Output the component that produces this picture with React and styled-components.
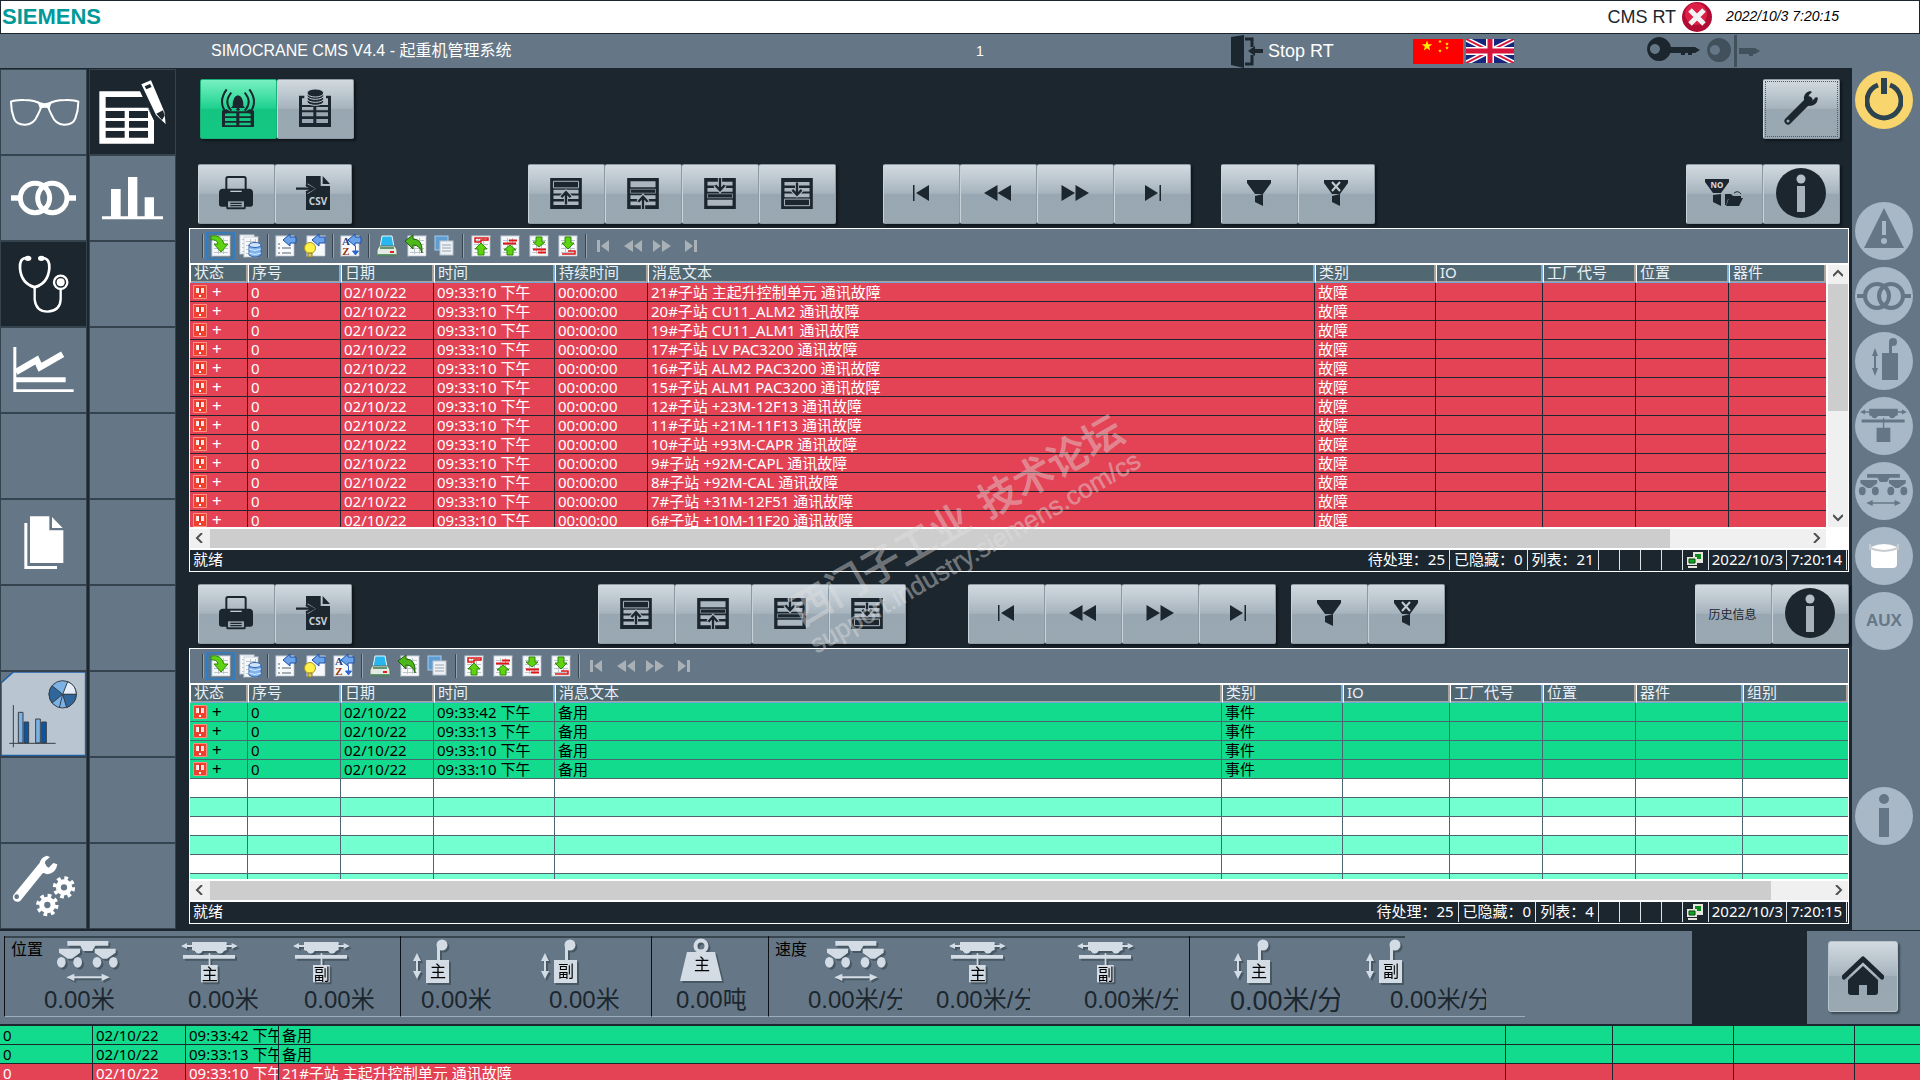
import React from 'react';
import styled, { createGlobalStyle, css } from 'styled-components';

const INK = '#1c262e';
const SLATE = '#657786';
const RED = '#e44356';
const GREEN = '#13db8e';
const MINT = '#73ffcf';
const UI = "'Liberation Sans', Arial, 'Noto Sans CJK SC', sans-serif";
const GRID = "'Noto Sans', Tahoma, 'Noto Sans CJK SC', sans-serif";

const GlobalStyle = createGlobalStyle`
  * { box-sizing: border-box; }
  html, body { margin: 0; padding: 0; background: ${INK}; }
  button { font: inherit; color: inherit; padding: 0; margin: 0; border: 0; background: none; }
  svg { display: block; }
`;

const Page = styled.div`
  display: flex;
  flex-direction: column;
  height: 100vh;
  overflow: hidden;
  background: ${INK};
  font-family: ${UI};
`;

/* ---------- header ---------- */

const BrandBar = styled.header`
  display: flex;
  align-items: center;
  flex: none;
  height: 34px;
  padding: 0 80px 0 1px;
  background: #fff;
  border: 1px solid ${INK};
`;

const Brand = styled.div`
  flex: 1;
  color: #009999;
  font-size: 22px;
  line-height: 32px;
  font-weight: 700;
`;

const Runtime = styled.div`
  display: flex;
  align-items: center;
  gap: 6px;
  color: ${INK};
  font-size: 18px;
`;

const Clock = styled.time`
  margin-left: 14px;
  padding-bottom: 2px;
  color: #000;
  font-size: 14px;
  font-style: italic;
`;

const TitleBar = styled.div`
  display: grid;
  grid-template-columns: 211fr 765fr 255fr 182fr 234fr 273fr;
  align-items: center;
  flex: none;
  height: 34px;
  background: ${SLATE};
  color: #fff;
`;

const Title = styled.h1`
  grid-column: 2;
  margin: 0;
  font-size: 16px;
  line-height: 32px;
  font-weight: 400;
`;

const ScreenNumber = styled.span`
  font-size: 14px;
`;

const StopButton = styled.button`
  display: flex;
  align-items: center;
  gap: 3px;
  font-size: 18px;
`;

const IconRow = styled.div`
  display: flex;
  align-items: center;
  gap: ${(p) => p.$gap}px;
`;

const Flat = styled.button`
  display: flex;
`;

/* ---------- body ---------- */

const Body = styled.div`
  display: grid;
  grid-template-columns: 176px minmax(0, 1fr) 68px;
  flex: none;
`;

const Nav = styled.nav`
  display: grid;
  grid-template-columns: 1fr 1fr;
  grid-auto-rows: 86px;
  column-gap: 2px;
  padding-top: 1px;
`;

const NavButton = styled.button`
  border: 1px solid #35434f;
  background: ${(p) => (p.$active ? INK : SLATE)};
  color: #fff;
  overflow: hidden;
  & > svg { margin: -1px; }
`;

const Main = styled.main`
  position: relative;
  padding: 11px 3px 6px 13px;
`;

const ButtonRow = styled.div`
  display: flex;
  align-items: flex-start;
  padding: 0 ${(p) => p.$end}px 0 ${(p) => p.$start}px;
  margin-bottom: ${(p) => p.$after}px;
`;

const ButtonGroup = styled.div`
  display: flex;
  margin-left: ${(p) => (p.$gap === 'auto' ? 'auto' : `${p.$gap || 0}px`)};
  box-shadow: 2px 2px 2px #10171c;
`;

const gloss = css`
  background: linear-gradient(#d2dae0 0%, #bcc7cf 25%, #a6b3bd 49%, #99a7b2 50%, #9aa8b2 100%);
`;

const ToolButton = styled.button`
  display: flex;
  align-items: center;
  justify-content: center;
  width: 77px;
  height: 60px;
  padding: 0 2px 2px 0;
  color: ${INK};
  font-size: 12px;
  border: 1px solid #8d9aa4;
  border-left-color: #c9d2d8;
  border-radius: 2px;
  ${gloss}
  ${(p) => p.$on && css`
    border-color: #19b07a;
    background: linear-gradient(#78f0c0 0%, #45e0a5 28%, #1dd08f 49%, #13c580 50%, #14c783 100%);
  `}
  ${(p) => p.$focus && css`
    outline: 1px dotted #4c5a65;
    outline-offset: -3px;
  `}
`;

const Panel = styled.section`
  border: 1px solid #fff;
  margin-bottom: ${(p) => p.$after || 0}px;
  background: #fff;
`;

const IconBar = styled.div`
  display: flex;
  align-items: center;
  height: 34px;
  padding-left: 9px;
  margin-bottom: 2px;
  background: ${SLATE};
`;

const Separator = styled.span`
  width: 7px;
  height: 24px;
  background: linear-gradient(90deg, transparent 3px, #38444e 3px, #38444e 4px, #97a4af 4px, #97a4af 5px, transparent 5px);
`;

const SmallButton = styled.button`
  display: flex;
  align-items: center;
  justify-content: center;
  width: 29px;
  height: 28px;
  & > svg { overflow: visible; }
  ${(p) => p.$on && css`
    background: #4f7698;
    border: 1px solid #2f7dc4;
  `}
`;

const TableArea = styled.div`
  display: flex;
  height: ${(p) => p.$height}px;
`;

const Viewport = styled.div`
  flex: 1;
  min-width: 0;
  overflow: hidden;
`;

const Table = styled.table`
  width: 100%;
  table-layout: fixed;
  border-collapse: separate;
  border-spacing: 0;
  font-family: ${GRID};
  font-size: 15px;
  line-height: 18px;
  text-align: left;
`;

const HeadCell = styled.th`
  height: 18px;
  padding: 0 3px 2px;
  overflow: hidden;
  white-space: nowrap;
  color: #e9eff5;
  font-weight: 400;
  line-height: 15px;
  background: #516772;
  border-left: 1px solid #fff;
  border-right: 1px solid #7fb2de;
  border-bottom: 1px solid #6fa8dc;
  box-shadow: inset -1px -1px 0 #a9a39c;
`;

const tones = {
  red: { bg: RED, ink: '#fff', line: INK },
  green: { bg: GREEN, ink: '#000', line: '#4c6570' },
  white: { bg: '#fff', ink: '#000', line: '#4c6570' },
  mint: { bg: MINT, ink: '#000', line: '#4c6570' },
};

const Row = styled.tr`
  background: ${(p) => tones[p.$tone].bg};
  color: ${(p) => tones[p.$tone].ink};
  & > td {
    height: 19px;
    padding: 0 0 0 3px;
    overflow: hidden;
    white-space: nowrap;
    border-right: 1px solid ${(p) => p.$line || tones[p.$tone].line};
    border-bottom: 1px solid ${(p) => p.$line || tones[p.$tone].line};
  }
  & > td:last-child { border-right: 0; }
`;

const State = styled.span`
  display: flex;
  align-items: center;
  gap: 5px;
  height: 18px;
  font-size: 17px;
`;

const VScroll = styled.div`
  display: flex;
  flex-direction: column;
  width: 20px;
  margin-left: 2px;
  background: #f0f0f0;
`;

const HScroll = styled.div`
  display: flex;
  height: 19px;
  margin: 2px ${(p) => p.$end}px 2px 0;
  background: #f0f0f0;
`;

const ScrollArrow = styled.button`
  display: flex;
  align-items: center;
  justify-content: center;
  flex: none;
  width: 20px;
  height: 19px;
  padding-bottom: 1px;
  color: #505050;
`;

const Thumb = styled.div`
  flex: ${(p) => p.$part};
  background: #cdcdcd;
`;

const Spare = styled.div`
  flex: ${(p) => p.$part};
`;

const StatusBar = styled.footer`
  display: flex;
  align-items: flex-start;
  height: 21px;
  padding: 0 1px 0 3px;
  background: ${INK};
  color: #fff;
  font-family: ${GRID};
  font-size: 15px;
  line-height: 19px;
`;

const StatusText = styled.span`
  flex: 1;
`;

const StatusCell = styled.span`
  display: flex;
  align-items: center;
  justify-content: center;
  min-width: ${(p) => p.$width || 21}px;
  height: 20px;
  padding: 0 ${(p) => p.$pad || 4}px 1px;
  white-space: nowrap;
  border-right: 1px solid #dfe4e8;
`;

const Rail = styled.aside`
  display: flex;
  flex-direction: column;
  align-items: flex-start;
  padding: 3px 0 0 3px;
  background: ${SLATE};
`;

const Lamp = styled.button`
  display: flex;
  align-items: center;
  justify-content: center;
  flex: none;
  width: 58px;
  height: 58px;
  margin-bottom: ${(p) => p.$after || 7}px;
  border-radius: 50%;
  background: ${(p) => (p.$lit ? '#f8d66d' : '#a9b8c6')};
  color: ${(p) => (p.$lit ? '#2d4450' : SLATE)};
  font-size: 17px;
  font-weight: 700;
`;

const Watermark = styled.div`
  position: absolute;
  left: 47%;
  top: 54%;
  transform: translate(-50%, -50%) rotate(-30deg);
  display: flex;
  flex-direction: column;
  align-items: center;
  color: rgba(225, 225, 225, 0.42);
  white-space: nowrap;
  pointer-events: none;
`;

const MarkLine = styled.div`
  display: flex;
  gap: 16px;
  font-size: ${(p) => p.$size}px;
  line-height: ${(p) => p.$line}px;
  font-weight: ${(p) => p.$weight || 400};
  -webkit-text-stroke: 1px rgba(225, 225, 225, 0.16);
`;

/* ---------- readouts ---------- */

const Readouts = styled.div`
  display: grid;
  grid-template-columns: minmax(0, 1692fr) 115fr 113fr;
  grid-template-rows: minmax(0, 1fr);
  flex: none;
  height: 96px;
  border-top: 1px solid ${INK};
  border-bottom: 2px solid ${INK};
`;

const Gauges = styled.div`
  display: flex;
  padding: 5px 0 7px 4px;
  background: ${SLATE};
`;

const Section = styled.section`
  display: flex;
  flex: none;
  width: ${(p) => p.$width}px;
  padding: 4px 0 0 ${(p) => p.$pad || 0}px;
  border-left: 1px solid #0b1116;
  border-bottom: 1px solid #9caebc;
  background: linear-gradient(#38464f, #38464f) no-repeat;
  background-size: ${(p) => p.$rule || '100%'} 2px;
`;

const SectionLabel = styled.h2`
  flex: none;
  width: ${(p) => p.$width}px;
  margin: 0;
  padding-left: 6px;
  color: #000;
  font-size: 16px;
  line-height: 20px;
  font-weight: 400;
`;

const Metric = styled.div`
  flex: none;
  width: ${(p) => p.$width}px;
`;

const MetricIcon = styled.div`
  height: 46px;
  padding-left: ${(p) => p.$indent || 0}px;
  color: #d3dce5;
  & > svg { overflow: visible; filter: drop-shadow(2px 2px 0 #475863); }
`;

const MetricValue = styled.output`
  display: block;
  width: ${(p) => p.$clip || 94}px;
  margin-left: ${(p) => p.$indent || 0}px;
  overflow: hidden;
  white-space: nowrap;
  color: ${INK};
  font-size: ${(p) => (p.$large ? 27 : 24)}px;
  line-height: ${(p) => (p.$large ? 31 : 27)}px;
`;

const HomeCell = styled.div`
  grid-column: 3;
  display: flex;
  align-items: center;
  justify-content: center;
  padding: 0 2px 3px 0;
  background: ${SLATE};
`;

const HomeButton = styled.button`
  display: flex;
  align-items: center;
  justify-content: center;
  width: 70px;
  height: 71px;
  border: 1px solid #b8c4cd;
  border-radius: 3px;
  box-shadow: 2px 2px 2px #3d4b56;
  color: ${INK};
  ${gloss}
`;

/* ---------- drawings ---------- */

const NavIcon = ({ x = 0, children }) => (
  <svg width="87" height="86" viewBox={`${x} 0 261 258`} fill="currentColor">{children}</svg>
);

const glasses = (
  <NavIcon>
    <g fill="none" stroke="currentColor" strokeWidth="6">
      <path d="M33 98 Q45 92 72 93 Q105 93 122 105 Q128 110 112 140 Q102 166 76 167 Q50 168 42 148 Q33 125 33 98Z" />
      <path d="M235 98 Q223 92 196 93 Q163 93 146 105 Q140 110 156 140 Q166 166 192 167 Q218 168 226 148 Q235 125 235 98Z" />
    </g>
    <path d="M112 97 Q134 108 156 97 L148 120 Q134 112 120 120Z" />
  </NavIcon>
);
const rings = (
  <NavIcon>
    <g fill="none" stroke="currentColor" strokeWidth="15">
      <circle cx="105" cy="129" r="44" />
      <circle cx="157" cy="129" r="44" />
    </g>
    <path d="M33 121h24v16H33zM206 121h22v16h-22z" />
  </NavIcon>
);
const stethoscope = (
  <NavIcon>
    <g fill="none" stroke="currentColor" strokeWidth="8" strokeLinecap="round">
      <path d="M78 51 Q58 52 60 82 Q64 128 104 138 Q144 128 148 82 Q150 52 128 51" />
      <path d="M104 140V176Q108 212 143 212Q180 210 182 176V146" strokeWidth="7" />
      <circle cx="182" cy="124" r="20" strokeWidth="7" />
    </g>
    <circle cx="182" cy="124" r="12" />
    <path d="M70 112 Q104 160 138 112 L118 138 L104 144 L90 138Z" />
    <ellipse cx="84" cy="52" rx="10" ry="8" /><ellipse cx="124" cy="52" rx="10" ry="8" />
  </NavIcon>
);
const trend = (
  <NavIcon>
    <path d="M40 60h9v127h172v8H40zM49 151h148v15H49z" />
    <path d="M48 135 L110 99 L120 121 L188 82" fill="none" stroke="currentColor" strokeWidth="19" />
  </NavIcon>
);
const papers = (
  <NavIcon>
    <path d="M90 52h58v42h42v98H90zM156 54l32 33h-32zM73 72h9v129h89v9H73z" />
  </NavIcon>
);
const tools = (
  <NavIcon>
    <path d="M52 163 L126 72" stroke="currentColor" strokeWidth="27" strokeLinecap="round" />
    <path d="M140 38 Q118 44 118 68 L124 88 L142 94 Q168 92 172 64 L160 60 L146 74 L134 66 L136 54 L150 42Z" />
    <circle cx="50" cy="161" r="7" fill={SLATE} />
    <g fill="none" stroke="currentColor">
      <circle cx="192" cy="133" r="17" strokeWidth="15" /><circle cx="192" cy="133" r="28" strokeWidth="11" strokeDasharray="11 11" />
      <circle cx="142" cy="186" r="17" strokeWidth="15" /><circle cx="142" cy="186" r="28" strokeWidth="11" strokeDasharray="11 11" />
    </g>
  </NavIcon>
);
const sheetPencil = (
  <NavIcon x={267}>
    <path fillRule="evenodd" d="M298 67h122l8 17H317v32h128l17 38v70H298zM317 126v21h57v-21zM387 126v21h57v-21zM317 156v20h57v-20zM387 156v20h57v-20zM317 186v20h57v-20zM387 186v20h57v-20z" />
    <path d="M440 112L470 160L500 165L462 154z" fill={INK} />
    <path d="M424 46L453 34L493 128L497 165L468 138z" />
    <path d="M434 52l16-7 5 9-16 7z" fill={INK} /><path d="M469 134l20-10 5 16-8 13z" fill={INK} />
  </NavIcon>
);
const bars = (
  <NavIcon x={267}><path d="M333 102h29v82h22V66h28v118h22v-57h28v57h27v9H306v-9h27z" /></NavIcon>
);
const report = (
  <NavIcon>
    <path d="M3 36L40 3H257V254H3z" fill="#b9c6d2" stroke="#1f5fa5" strokeWidth="5" />
    <g stroke="#3a3f45" strokeWidth="3">
      <path d="M55 124h14v92H55z" fill="#7ab2e6" /><path d="M72 153h14v63H72z" fill="#0a55a4" />
      <path d="M107 144h14v72h-14z" fill="#7ab2e6" /><path d="M125 153h14v63h-14z" fill="#0a55a4" />
      <path d="M40 102v127M28 217h139" />
      <circle cx="188" cy="70" r="41" fill="#7ab2e6" />
      <path d="M188 70L203 32Q228 42 229 70Z" fill="#e3eefa" />
      <path d="M188 70H229Q228 98 200 110Z M188 70L156 44Q138 68 156 96Z" fill="#2f669c" />
      <path d="M188 70L178 110" />
    </g>
  </NavIcon>
);

const alarmSheet = (
  <svg width="36" height="40" viewBox="0 0 108 120">
    <path fill={INK} fillRule="evenodd" d="M6 68l14-4 10 6h48l10-6 14 4v49H6zM15 76v9h34v-9zM58 76v9h34v-9zM15 90v9h34v-9zM58 90v9h34v-9zM15 104v8h34v-8zM58 104v8h34v-8z" />
    <path d="M38 54Q38 24 54 22Q70 24 70 54L75 60H33z" fill={INK} /><circle cx="54" cy="64" r="5" fill={INK} />
    <g fill="none" stroke={INK} strokeWidth="6"><path d="M20 4Q-8 42 20 76M34 14Q10 42 34 68M88 4Q116 42 88 76M74 14Q98 42 74 68" /></g>
  </svg>
);
const dbSheet = (
  <svg width="32" height="38" viewBox="0 0 96 114">
    <path fill={INK} fillRule="evenodd" d="M0 20h96v94H0zM9 28v20h78V28h-6v-8H16v8zM9 54v10h34V54zM52 54v10h35V54zM9 70v12h34V70zM52 70v12h35V70zM9 90v12h34V90zM52 90v12h35V90z" />
    <g fill={INK} stroke="#bcc7cf" strokeWidth="3"><ellipse cx="49" cy="38" rx="25" ry="11" /><ellipse cx="49" cy="29" rx="25" ry="11" /><ellipse cx="49" cy="20" rx="25" ry="11" /><ellipse cx="49" cy="12" rx="25" ry="12" /></g>
  </svg>
);
const printer = (
  <svg width="34" height="34" viewBox="0 0 102 102">
    <path d="M22 40V8Q22 3 27 3H75Q80 3 80 8V40" fill="none" stroke={INK} strokeWidth="6" />
    <path d="M12 38h78q12 0 12 12v34q0 8-8 8H8q-8 0-8-8V50q0-12 12-12z" fill={INK} />
    <path d="M22 76h58v20q0 4-4 4H26q-4 0-4-4z" fill={INK} />
    <path d="M27 76h48v18H27z" fill="#9aa8b2" /><path d="M34 80h34v4H34zM34 87h34v4H34z" fill={INK} /><path d="M34 44h34v4H34z" fill="#c3ccd3" />
  </svg>
);
const csv = (
  <svg width="34" height="34" viewBox="0 0 102 102">
    <path d="M30 0h44v30h28v72H30z M80 0l22 24H80z" fill={INK} />
    <path d="M0 38h44" stroke="#aab6c0" strokeWidth="13" /><path d="M34 24l22 14-22 14" fill="none" stroke="#b4c0c8" strokeWidth="4" />
    <path d="M0 38h48M30 26l22 12-22 12" fill="none" stroke={INK} strokeWidth="7" />
    <text x="66" y="88" textAnchor="middle" fontFamily="Noto Sans" fontWeight="700" fontSize="30" fill="#c6d0d7">CSV</text>
  </svg>
);
const ListIcon = ({ inner, flip }) => (
  <svg width="32" height="31" viewBox="0 0 96 94">
    <g transform={flip ? 'matrix(1 0 0 -1 0 94)' : undefined}>
      <path d="M0 0h96v94H0z" fill={INK} />
      {inner ? (
        <>
          <path d="M10 10h76v18H10zM10 52h76v12H10zM10 71h76v12H10z" fill="#aab6c0" />
          <path d="M10 34h76v12H10z" fill="none" stroke="#aab6c0" strokeWidth="2" />
          <path d="M48 94V58M33 72L48 56L63 72" fill="none" stroke="#aab6c0" strokeWidth="13" />
          <path d="M48 94V58M34 72L48 57L62 72" fill="none" stroke={INK} strokeWidth="7" />
        </>
      ) : (
        <>
          <path d="M10 10h76v20H10z" fill="none" stroke="#aab6c0" strokeWidth="3" />
          <path d="M10 36h76v11H10zM10 53h76v11H10zM10 71h76v11H10z" fill="#aab6c0" />
          <path d="M48 80V44M33 58L48 42L63 58" fill="none" stroke="#aab6c0" strokeWidth="12" />
          <path d="M48 80V44M34 58L48 43L62 58" fill="none" stroke={INK} strokeWidth="7" />
        </>
      )}
    </g>
  </svg>
);
const Player = ({ kind }) => (
  <svg width="28" height="16" viewBox="0 0 28 16" fill={INK}>
    {kind === 'first' && <path d="M6 0h1.500v16H6zM22 0v16L9 8z" />}
    {kind === 'back' && <path d="M13.500 0v16L0 8zM27 0v16L13.500 8z" />}
    {kind === 'next' && <path d="M.5 0v16L14 8zM14.500 0v16L28 8z" />}
    {kind === 'last' && <path d="M7 0v16L20 8zM21.500 0H23v16h-1.500z" />}
  </svg>
);
const Funnel = ({ cross }) => (
  <svg width="24" height="26" viewBox="0 0 24 26">
    <path d="M0 0h24v3l-8 11H8L0 3zM8 16l8-2v12l-8-4z" fill={INK} />
    {cross && <path d="M8 2l8 9M16 2L8 11" stroke="#c3ccd3" strokeWidth="2" />}
  </svg>
);
const funnelFolder = (
  <svg width="38" height="28" viewBox="0 0 38 28">
    <path d="M0 0h24v3l-8 11H8L0 3zM8 16l8-1v12l-8-4z" fill={INK} />
    <text x="12" y="9" textAnchor="middle" fontFamily="Noto Sans" fontWeight="700" fontSize="8" fill="#d4dce2">NO</text>
    <path d="M20 15h6l2 2h8v3H23l-2 6h-1zM24 19h14l-4 8H21z" fill={INK} /><path d="M29 14q4-3 7 1" fill="none" stroke={INK} />
  </svg>
);
const info = (
  <svg width="50" height="50" viewBox="0 0 50 50">
    <circle cx="25" cy="25" r="25" fill={INK} /><circle cx="25" cy="11" r="4.500" fill="#b4c0c8" /><path d="M21 18h8v26h-8z" fill="#a6b3bd" />
  </svg>
);
const wrench = (
  <svg width="36" height="36" viewBox="0 0 36 36">
    <path d="M5 31L26 10" stroke={INK} strokeWidth="7" strokeLinecap="round" />
    <path d="M27 1q-7 2-6 9l1 4 4 2q8 0 9-8l-2-1-4 4-4-2 1-4 3-3z" fill={INK} /><circle cx="5" cy="31" r="1.500" fill="#9aa8b2" />
  </svg>
);
const home = (
  <svg width="42" height="40" viewBox="0 0 42 40">
    <path d="M2 21L21 3L40 21" fill="none" stroke={INK} strokeWidth="5" strokeLinecap="round" strokeLinejoin="round" />
    <path d="M6 24L21 10L36 24V36q0 3-3 3H25V29h-8v10H9q-3 0-3-3z" fill={INK} />
  </svg>
);

const Sheet = ({ x = 2, y = 2, w = 18, h = 20, lined = true }) => (
  <g>
    <rect x={x + 1} y={y + 1} width={w} height={h} fill="#3c4a57" />
    <rect x={x} y={y} width={w} height={h} fill="#f7f9fb" stroke="#c9d3dd" strokeWidth="1" />
    {lined && <path d={`M${x + 2} ${y + 4.500}h${w - 4}M${x + 2} ${y + 8.500}h${w - 4}M${x + 2} ${y + 12.500}h${w - 4}M${x + 2} ${y + 16.500}h${w - 4}M${x + 6.500} ${y + 2}v${h - 4}M${x + 11.500} ${y + 2}v${h - 4}`} stroke="#bcc4cc" fill="none" />}
  </g>
);
const blueArrow = <path d="M9 6l7-6v3h6v6h-6v3z" fill="#6aa3ea" stroke="#1d4fa8" />;
const smallArt = {
  jump: <><Sheet x={3} /><path d="M2 2q10-2 13 8h4l-7 8-7-8h4Q8 5 2 6z" fill="#5fd312" stroke="#2f8a06" /></>,
  archive: <g transform="translate(2 0)"><Sheet x={0} y={1} w={14} h={19} /><Sheet x={4} y={3} w={14} /><path d="M9 11v10q6 4 12 0V11z" fill="#7fb4ee" stroke="#2f66b0" /><ellipse cx="15" cy="11" rx="6" ry="2.500" fill="#cfe3fa" stroke="#2f66b0" /><path d="M9 15q6 3 12 0M9 19q6 3 12 0" fill="none" stroke="#dbeafc" /></g>,
  select: <><Sheet lined={false} /><path d="M4 10h2M4 14h2M4 19h2M8 14h9M8 19h9" stroke="#8b949d" strokeWidth="1.500" />{blueArrow}</>,
  bulb: <><Sheet lined={false} x={4} />{blueArrow}<circle cx="7" cy="14" r="5.500" fill="#fff04a" stroke="#a8971a" /><path d="M5 19h4v4H5z" fill="#d8c86a" stroke="#8b7d1f" /></>,
  sort: <><Sheet lined={false} /><text x="7" y="11" textAnchor="middle" fontFamily="Liberation Serif" fontWeight="700" fontSize="11" fill="#1d3f8a">A</text><text x="7" y="21" textAnchor="middle" fontFamily="Liberation Serif" fontWeight="700" fontSize="11" fill="#9a3a12">Z</text>{blueArrow}<path d="M16.500 12v7M13.500 17l3 4 3-4z" fill="#2f66d0" stroke="#2f66d0" /></>,
  print: <><path d="M7 2h10l2 11H5z" fill="#29b6ee" stroke="#eaf7fd" /><path d="M4 12h16l2 4v4q0 2-2 2H4q-2 0-2-2v-4z" fill="#e4ebe4" stroke="#5a7262" /><path d="M5 14h14M3 21h18" stroke="#3a7a4c" strokeWidth="1.500" /><path d="M15 18h4" stroke="#e02020" strokeWidth="2" /></>,
  undo: <><Sheet x={4} /><path d="M1 7l8-6v4q10 0 9 14-2-8-9-8v4z" fill="#4cb81a" stroke="#1f5f06" /></>,
  copy: <><rect x="2" y="2" width="13" height="14" fill="#5f9cd2" stroke="#a8cdf0" /><rect x="7" y="7" width="13" height="14" fill="#edf1f5" stroke="#b9c3cc" /><path d="M9 11h9M9 14h9M9 17h9" stroke="#9aa4ae" /></>,
  top: <><Sheet x={3} /><path d="M6 4h13v2H12v2H6z" stroke="#e01616" fill="none" strokeWidth="1.500" /><path d="M12 9l6 6h-3v6H9v-6H6z" fill="#5fd312" stroke="#2f8a06" /></>,
  prev: <><Sheet x={3} /><path d="M11 6.500h8M5 9.500h13" stroke="#e01616" strokeWidth="2" /><path d="M12 11l6 5h-3v5H9v-5H6z" fill="#5fd312" stroke="#2f8a06" /></>,
  follow: <><Sheet x={3} /><path d="M6 15.500h13M11 18.500h8" stroke="#e01616" strokeWidth="2" /><path d="M12 13l6-5h-3V3H9v5H6z" fill="#5fd312" stroke="#2f8a06" /></>,
  bottom: <><Sheet x={3} /><path d="M6 20h13v-3h-7" stroke="#e01616" fill="none" strokeWidth="1.500" /><path d="M12 15l6-6h-3V3H9v6H6z" fill="#5fd312" stroke="#2f8a06" /></>,
  first: <path d="M5 6h3v12H5zM17 6v12l-8-6z" fill="#a9b0b6" />,
  back: <path d="M12 6v12l-9-6zM21 6v12l-8-6z" fill="#a9b0b6" />,
  next: <path d="M3 6v12l8-6zM12 6v12l9-6z" fill="#a9b0b6" />,
  last: <path d="M6 6v12l8-6zM15 6h3v12h-3z" fill="#a9b0b6" />,
};

const Gantry = ({ size = 65 }) => (
  <svg width={size} height={Math.round(size * 46 / 65)} viewBox="165 840 195 138" fill="currentColor">
    <path d="M199 843h123v14h-39l-9 16h-27l-9-16h-39zM174 866h63v12l-24 18h-13l-26-18zM281 866h63v12l-26 18h-13l-24-18z" />
    <ellipse cx="181" cy="907" rx="13" ry="16" /><ellipse cx="230" cy="907" rx="13" ry="16" /><ellipse cx="288" cy="907" rx="13" ry="16" /><ellipse cx="337" cy="907" rx="13" ry="16" />
    <path d="M196 952l24-11v8h82v-8l24 11-24 11v-8h-82v8z" />
  </svg>
);
const Trolley = ({ size = 60, mark }) => (
  <svg width={size} height={Math.round(size * 46 / 60)} viewBox="534 840 180 138" fill="currentColor">
    <path d="M570 846h104v24l-8 3q-4 8-12 8t-12-8h-40q-4 8-12 8t-12-8l-8-3zM537 858l18-9v6h15v6h-15v6zM707 858l-18-9v6h-15v6h15v6zM543 885h156v11H543zM620 880h5v40h-5zM597 915h50v52h-50z" />
    {mark && <text x="623" y="959" textAnchor="middle" fontSize="48" fontFamily={UI} fill="#000">{mark}</text>}
  </svg>
);
const Hoist = ({ mark }) => (
  <svg width="44" height="46" viewBox="0 0 44 46" fill="currentColor">
    <circle cx="33" cy="5" r="5.500" /><path d="M28 5h3v16h-3zM17 20h23v23H17zM8 13l4 8h-3v10h3l-4 8-4-8h3V21H4z" />
    {mark && <text x="29" y="37" textAnchor="middle" fontSize="16" fontFamily={UI} fill="#000">{mark}</text>}
  </svg>
);
const Weight = () => (
  <svg width="46" height="46" viewBox="0 0 46 46" fill="currentColor">
    <circle cx="21" cy="6" r="5.500" fill="none" stroke="currentColor" strokeWidth="4" /><path d="M7 12h28l7 29H0z" />
    <text x="22" y="30" textAnchor="middle" fontSize="16" fontFamily={UI} fill="#000">主</text>
  </svg>
);

const power = (
  <svg width="38" height="44" viewBox="0 0 38 44"><path d="M13 7a17 17 0 1 0 12 0" fill="none" stroke="currentColor" strokeWidth="5" /><path d="M16 0h6v16h-6z" fill="currentColor" /></svg>
);
const warning = (
  <svg width="42" height="50" viewBox="0 0 42 50"><path d="M21 2L41 42H1z" fill="currentColor" /><path d="M19 15h4v14h-4z" fill="#a9b8c6" /><circle cx="21" cy="35" r="3" fill="#a9b8c6" /></svg>
);
const railRings = (
  <svg width="54" height="30" viewBox="0 0 54 30"><g fill="none" stroke="currentColor" strokeWidth="4"><circle cx="20" cy="15" r="12" /><circle cx="34" cy="15" r="12" /></g><path d="M0 13h8v4H0zM46 13h8v4h-8z" fill="currentColor" /></svg>
);
const railHoist = (
  <svg width="44" height="46" viewBox="0 0 44 46" fill="currentColor">
    <circle cx="31" cy="4" r="4" /><path d="M27 4h3v12h-3zM20 15h16v27H20zM13 10l3 8h-2v12h2l-3 8-3-8h2V18h-2z" />
  </svg>
);
const bucket = (
  <svg width="34" height="30" viewBox="0 0 34 30"><path d="M4 6q13-6 26 0v18q-1 3-4 3H8q-3 0-4-3z" fill="#fff" /><path d="M3 7q14 6 28 0M3 3v6M31 3v6" fill="none" stroke="#c9cdd1" strokeWidth="2" /></svg>
);
const railInfo = (
  <svg width="12" height="44" viewBox="0 0 12 44" fill="currentColor"><circle cx="6" cy="5" r="5" /><path d="M1 14h10v29H1z" /></svg>
);

const closeMark = (
  <svg width="30" height="30" viewBox="0 0 30 30"><circle cx="15" cy="15" r="15" fill="#b00c33" /><circle cx="14" cy="12" r="11" fill="#dd1f45" /><path d="M8 8l14 14M22 8L8 22" stroke="#f2f2f4" strokeWidth="5" /></svg>
);
const door = (
  <svg width="34" height="33" viewBox="0 0 34 33"><path d="M0 2L13 0v33L0 30z" fill={INK} /><path d="M14 4h7v8M21 20v9h-7" fill="none" stroke={INK} strokeWidth="3" /><path d="M17 16l7-5v3h8v4h-8v3z" fill={INK} /></svg>
);
const star = (cx, cy, r) => {
  const pts = Array.from({ length: 10 }, (_, i) => {
    const a = (Math.PI / 5) * i - Math.PI / 2;
    const q = i % 2 ? r * 0.4 : r;
    return `${cx + q * Math.cos(a)},${cy + q * Math.sin(a)}`;
  });
  return <polygon key={`${cx}-${cy}`} points={pts.join(' ')} fill="#ffee00" />;
};
const flagCn = (
  <svg width="50" height="25" viewBox="0 0 50 25"><path d="M0 0h50v25H0z" fill="#fe0000" />{[star(14, 7, 5.5), star(27, 2.5, 2), star(34, 5, 2), star(34, 9, 2), star(27, 12, 2)]}</svg>
);
const flagUk = (
  <svg width="48" height="24" viewBox="0 0 48 24"><path d="M0 0h48v24H0z" fill="#16267d" /><path d="M0 0l48 24M48 0L0 24" stroke="#fff" strokeWidth="5" /><path d="M0 0l48 24M48 0L0 24" stroke="#d8143a" strokeWidth="2" /><path d="M24 0v24M0 12h48" stroke="#fff" strokeWidth="8" /><path d="M24 0v24M0 12h48" stroke="#d8143a" strokeWidth="5" /></svg>
);
const keyOn = (
  <svg width="53" height="28" viewBox="0 0 53 28" fill={INK}><path fillRule="evenodd" d="M12 0a12 12 0 1 0 .1 0zM8 7a5 5 0 1 1-.1 0z" /><path d="M22 10h26l5 3-5 3h-3v2h-4v-2h-3v2h-4v-2H22z" /></svg>
);
const keyOff = (
  <svg width="54" height="32" viewBox="0 0 54 32" fill="#42505c"><path fillRule="evenodd" d="M13 3a12 12 0 1 0 .1 0zM9 10a5 5 0 1 1-.1 0z" /><path d="M28 0h3v32h-3zM33 13h16l5 3-5 3h-2v2h-4v-2H33z" /></svg>
);
const alarmBadge = (
  <svg width="14" height="14" viewBox="0 0 14 14"><rect width="14" height="14" rx="1" fill="#ff8f80" /><path d="M1 1h12v12H1z" fill="#f04030" /><path d="M3 3h8v5H3z" fill="#fff" opacity=".85" /><path d="M6 2h2v6H6z" fill="#e8281c" /><path d="M5 3h1v5H5zM8 3h1v5H8zM6 10h2v2H6z" fill="#fff" /></svg>
);
const linkIcon = (
  <svg width="16" height="16" viewBox="0 0 16 16"><path d="M6 0h10v11H6z" fill="#e6e6dc" /><path d="M8 2h6v5H8z" fill="#0c8a1e" /><path d="M0 5h10v8H0zM1 14h9v2H1z" fill="#e6e6dc" /><path d="M2 7h6v4H2z" fill="#11a326" stroke="#044a0c" /></svg>
);
const Chevron = ({ d }) => (
  <svg width="10" height="10" viewBox="0 0 10 10"><path d={d} fill="none" stroke="currentColor" strokeWidth="2" /></svg>
);
const LEFT = 'M7 0L2 5L7 10';
const RIGHT = 'M3 0L8 5L3 10';
const UP = 'M0 7L5 2L10 7';
const DOWN = 'M0 3L5 8L10 3';

/* ---------- data ---------- */

const navItems = [
  ['总览', glasses], ['消息', sheetPencil, true],
  ['驱动', rings], ['统计', bars],
  ['诊断', stethoscope, true], ['空 1', null],
  ['趋势', trend], ['空 2', null],
  ['空 3', null], ['空 4', null],
  ['文档', papers], ['空 5', null],
  ['空 6', null], ['空 7', null],
  ['报表', report], ['空 8', null],
  ['空 9', null], ['空 10', null],
  ['设置', tools], ['空 11', null],
];

const faults = [
  '21#子站 主起升控制单元 通讯故障', '20#子站 CU11_ALM2 通讯故障', '19#子站 CU11_ALM1 通讯故障',
  '17#子站 LV PAC3200 通讯故障', '16#子站 ALM2 PAC3200 通讯故障', '15#子站 ALM1 PAC3200 通讯故障',
  '12#子站 +23M-12F13 通讯故障', '11#子站 +21M-11F13 通讯故障', '10#子站 +93M-CAPR 通讯故障',
  '9#子站 +92M-CAPL 通讯故障', '8#子站 +92M-CAL 通讯故障', '7#子站 +31M-12F51 通讯故障',
  '6#子站 +10M-11F20 通讯故障',
];

const faultCols = [['状态', 58], ['序号', 93], ['日期', 93], ['时间', 121], ['持续时间', 93], ['消息文本'], ['类别', 121], ['IO', 107], ['工厂代号', 93], ['位置', 93], ['器件', 97]];
const faultRows = faults.map((text) => ({ tone: 'red', cells: ['+', '0', '02/10/22', '09:33:10 下午', '00:00:00', text, '故障', '', '', '', ''] }));

const eventCols = [['状态', 58], ['序号', 93], ['日期', 93], ['时间', 121], ['消息文本'], ['类别', 121], ['IO', 107], ['工厂代号', 93], ['位置', 93], ['器件', 107], ['组别', 105]];
const eventRows = [
  ...['09:33:42', '09:33:13', '09:33:10', '09:33:10'].map((t) => ({ tone: 'green', cells: ['+', '0', '02/10/22', `${t} 下午`, '备用', '事件', '', '', '', '', ''] })),
  ...['white', 'mint', 'white', 'mint', 'white', 'mint'].map((tone) => ({ tone, cells: Array(11).fill('') })),
];

const tickerRows = [
  ['green', '0', '02/10/22', '09:33:42 下午', '备用'],
  ['green', '0', '02/10/22', '09:33:13 下午', '备用'],
  ['red', '0', '02/10/22', '09:33:10 下午', '21#子站 主起升控制单元 通讯故障'],
];

const barHead = ['|', 'jump', 'archive', '|', 'select', 'bulb'];
const barTail = ['sort', '|', 'print', 'undo', 'copy', '|', 'top', 'prev', 'follow', 'bottom', '|', 'first', 'back', 'next', 'last'];

/* ---------- parts ---------- */

function Controls({ gaps, start, end, lastPair }) {
  return (
    <ButtonRow $start={start} $end={end} $after={4}>
      <ButtonGroup>
        <ToolButton aria-label="打印">{printer}</ToolButton>
        <ToolButton aria-label="导出 CSV">{csv}</ToolButton>
      </ButtonGroup>
      <ButtonGroup $gap={gaps[0]}>
        <ToolButton aria-label="首行"><ListIcon /></ToolButton>
        <ToolButton aria-label="上一行"><ListIcon inner /></ToolButton>
        <ToolButton aria-label="下一行"><ListIcon inner flip /></ToolButton>
        <ToolButton aria-label="末行"><ListIcon flip /></ToolButton>
      </ButtonGroup>
      <ButtonGroup $gap={gaps[1]}>
        {['first', 'back', 'next', 'last'].map((k) => <ToolButton key={k} aria-label={k}><Player kind={k} /></ToolButton>)}
      </ButtonGroup>
      <ButtonGroup $gap={gaps[2]}>
        <ToolButton aria-label="筛选"><Funnel /></ToolButton>
        <ToolButton aria-label="清除筛选"><Funnel cross /></ToolButton>
      </ButtonGroup>
      <ButtonGroup $gap="auto">{lastPair}</ButtonGroup>
    </ButtonRow>
  );
}

function MessagePanel({ items, cols, rows, height, vertical, thumb, counts, time, after }) {
  return (
    <Panel $after={after}>
      <IconBar>
        {items.map((k, i) => (k === '|' ? <Separator key={i} /> : (
          <SmallButton key={i} aria-label={k} $on={k === 'jump'}><svg width="24" height="24" viewBox="0 0 24 24">{smallArt[k]}</svg></SmallButton>
        )))}
      </IconBar>
      <TableArea $height={height}>
        <Viewport>
          <Table>
            <colgroup>{cols.map(([n, w]) => <col key={n} width={w} />)}</colgroup>
            <thead><tr>{cols.map(([n]) => <HeadCell key={n}>{n}</HeadCell>)}</tr></thead>
            <tbody>
              {rows.map((r, i) => (
                <Row key={i} $tone={r.tone}>
                  {r.cells.map((c, j) => <td key={j}>{c === '+' ? <State>{alarmBadge}+</State> : c}</td>)}
                </Row>
              ))}
            </tbody>
          </Table>
        </Viewport>
        {vertical && (
          <VScroll>
            <ScrollArrow aria-label="向上滚动"><Chevron d={UP} /></ScrollArrow>
            <Thumb $part={127} />
            <Spare $part={97} />
            <ScrollArrow aria-label="向下滚动"><Chevron d={DOWN} /></ScrollArrow>
          </VScroll>
        )}
      </TableArea>
      <HScroll $end={vertical ? 22 : 0}>
        <ScrollArrow aria-label="向左滚动"><Chevron d={LEFT} /></ScrollArrow>
        <Thumb $part={thumb[0]} />
        <Spare $part={thumb[1]} />
        <ScrollArrow aria-label="向右滚动"><Chevron d={RIGHT} /></ScrollArrow>
      </HScroll>
      <StatusBar>
        <StatusText>就绪</StatusText>
        {counts.map((c) => <StatusCell key={c}>{c}</StatusCell>)}
        <StatusCell /><StatusCell /><StatusCell /><StatusCell />
        <StatusCell $width={26}>{linkIcon}</StatusCell>
        <StatusCell $width={78} $pad={3}>2022/10/3</StatusCell>
        <StatusCell $width={60} $pad={3}>{time}</StatusCell>
      </StatusBar>
    </Panel>
  );
}

const Gauge = ({ width, icon, iconIndent, indent, large, clip, children }) => (
  <Metric $width={width}>
    <MetricIcon $indent={iconIndent}>{icon}</MetricIcon>
    <MetricValue $indent={indent} $large={large} $clip={clip}>{children}</MetricValue>
  </Metric>
);

export default function App() {
  return (
    <Page>
      <GlobalStyle />
      <BrandBar>
        <Brand>SIEMENS</Brand>
        <Runtime><span>CMS RT</span>{closeMark}</Runtime>
        <Clock>2022/10/3 7:20:15</Clock>
      </BrandBar>
      <TitleBar>
        <Title>SIMOCRANE CMS V4.4 - 起重机管理系统</Title>
        <ScreenNumber>1</ScreenNumber>
        <StopButton>{door}Stop RT</StopButton>
        <IconRow $gap={3}><Flat aria-label="中文">{flagCn}</Flat><Flat aria-label="English">{flagUk}</Flat></IconRow>
        <IconRow $gap={6}><Flat aria-label="登录">{keyOn}</Flat><Flat aria-label="注销">{keyOff}</Flat></IconRow>
      </TitleBar>

      <Body>
        <Nav>
          {navItems.map(([name, art, active]) => <NavButton key={name} aria-label={name} $active={active}>{art}</NavButton>)}
        </Nav>

        <Main>
          <ButtonRow $start={11} $end={9} $after={25}>
            <ButtonGroup>
              <ToolButton $on aria-label="当前报警">{alarmSheet}</ToolButton>
              <ToolButton aria-label="历史报警">{dbSheet}</ToolButton>
            </ButtonGroup>
            <ButtonGroup $gap="auto"><ToolButton $focus aria-label="配置">{wrench}</ToolButton></ButtonGroup>
          </ButtonRow>

          <Controls
            start={9} end={9} gaps={[176, 47, 30]}
            lastPair={<><ToolButton aria-label="无筛选">{funnelFolder}</ToolButton><ToolButton aria-label="信息">{info}</ToolButton></>}
          />
          <MessagePanel
            items={[...barHead, '|', ...barTail]} cols={faultCols} rows={faultRows} height={262} vertical after={12}
            thumb={[1459, 136]} counts={['待处理：25', '已隐藏：0', '列表：21']} time="7:20:14"
          />
          <Controls
            start={9} end={0} gaps={[246, 62, 15]}
            lastPair={<><ToolButton>历史信息</ToolButton><ToolButton aria-label="信息">{info}</ToolButton></>}
          />
          <MessagePanel
            items={[...barHead, ...barTail]} cols={eventCols} rows={eventRows} height={194}
            thumb={[1561, 57]} counts={['待处理：25', '已隐藏：0', '列表：4']} time="7:20:15"
          />
          <Watermark>
            <MarkLine $size={40} $line={44} $weight={500}><span>西门子工业</span><span>技术论坛</span></MarkLine>
            <MarkLine $size={26} $line={28}>support.industry.siemens.com/cs</MarkLine>
          </Watermark>
        </Main>

        <Rail>
          <Lamp $lit $after={73} aria-label="电源">{power}</Lamp>
          <Lamp aria-label="警告">{warning}</Lamp>
          <Lamp aria-label="驱动">{railRings}</Lamp>
          <Lamp aria-label="起升">{railHoist}</Lamp>
          <Lamp aria-label="小车"><Trolley size={50} /></Lamp>
          <Lamp aria-label="大车"><Gantry size={52} /></Lamp>
          <Lamp aria-label="抓斗">{bucket}</Lamp>
          <Lamp $after={137}>AUX</Lamp>
          <Lamp aria-label="信息">{railInfo}</Lamp>
        </Rail>
      </Body>

      <Readouts>
        <Gauges>
          <Section $width={396}>
            <SectionLabel $width={39}>位置</SectionLabel>
            <Gauge width={136} iconIndent={12} icon={<Gantry />}>0.00米</Gauge>
            <Gauge width={112} indent={8} icon={<Trolley mark="主" />}>0.00米</Gauge>
            <Gauge width={96} indent={12} icon={<Trolley mark="副" />}>0.00米</Gauge>
          </Section>
          <Section $width={251} $pad={8}>
            <Gauge width={128} indent={12} icon={<Hoist mark="主" />}>0.00米</Gauge>
            <Gauge width={100} indent={12} icon={<Hoist mark="副" />}>0.00米</Gauge>
          </Section>
          <Section $width={117} $pad={24}>
            <Gauge width={90} iconIndent={4} icon={<Weight />}>0.00吨</Gauge>
          </Section>
          <Section $width={421}>
            <SectionLabel $width={39}>速度</SectionLabel>
            <Gauge width={128} iconIndent={16} icon={<Gantry />}>0.00米/分</Gauge>
            <Gauge width={136} iconIndent={12} icon={<Trolley mark="主" />}>0.00米/分</Gauge>
            <Gauge width={112} indent={12} iconIndent={4} icon={<Trolley mark="副" />}>0.00米/分</Gauge>
          </Section>
          <Section $width={336} $pad={40} $rule="215px">
            <Gauge width={132} large clip={110} icon={<Hoist mark="主" />}>0.00米/分</Gauge>
            <Gauge width={136} indent={28} clip={96} icon={<Hoist mark="副" />}>0.00米/分</Gauge>
          </Section>
        </Gauges>
        <HomeCell><HomeButton aria-label="主页">{home}</HomeButton></HomeCell>
      </Readouts>

      <Table>
        <colgroup>
          <col width="93" /><col width="93" /><col width="93" /><col />
          <col width="107" /><col width="121" /><col width="121" /><col width="65" />
        </colgroup>
        <tbody>
          {tickerRows.map(([tone, ...cells], i) => (
            <Row key={i} $tone={tone} $line={INK}>
              {cells.map((c, j) => <td key={j}>{c}</td>)}
              <td /><td /><td /><td />
            </Row>
          ))}
        </tbody>
      </Table>
    </Page>
  );
}
